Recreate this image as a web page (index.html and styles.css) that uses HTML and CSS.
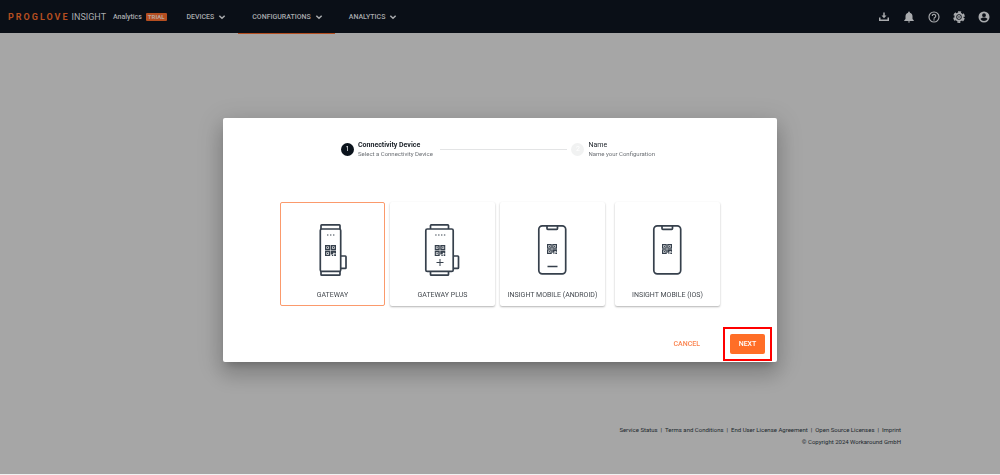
FILE: index.html
```html
<!DOCTYPE html>
<html lang="en">
<head>
<meta charset="utf-8">
<meta name="viewport" content="width=device-width, initial-scale=1">
<title>ProGlove Insight</title>
<link rel="stylesheet" href="styles.css">
</head>
<body>
<svg class="defs" aria-hidden="true">
  <symbol id="chevron" viewBox="0 0 6 6"><path d="M1 2l2 2 2-2" fill="none" stroke="currentColor" stroke-width="1.1"/></symbol>
  <symbol id="qr" viewBox="0 0 12 12">
    <path fill="#36404c" fill-rule="evenodd" d="M0 0h5.700v5.700H0zM1.500 1.500v2.700h2.700V1.500zM6.300 0H12v5.700H6.300zM7.800 1.500v2.700h2.700V1.500zM0 6.300h5.700V12H0zM1.500 7.800v2.700h2.700V7.800zM6.300 6.300H12v3h-1.600V8.400H9v2H6.300zM7.500 11H9v1H7.500zM10 10.200h2V12h-2z"/>
    <path fill="#36404c" d="M2.200 2.200h1.300v1.300H2.200zM8.500 2.200h1.300v1.300H8.500zM2.200 8.500h1.300v1.300H2.200z"/>
  </symbol>
</svg>

<header class="topbar">
  <a class="brand" href="#"><span class="brand-name">PROGLOVE</span><span class="brand-product">INSIGHT</span></a>
  <span class="plan">Analytics</span>
  <span class="trial">TRIAL</span>
  <nav class="menu">
    <button class="menu-item" type="button">DEVICES <svg class="chevron"><use href="#chevron"/></svg></button>
    <button class="menu-item menu-item-active" type="button">CONFIGURATIONS <svg class="chevron"><use href="#chevron"/></svg></button>
    <button class="menu-item" type="button">ANALYTICS <svg class="chevron"><use href="#chevron"/></svg></button>
  </nav>
  <div class="tools">
    <button class="tool" type="button" aria-label="Downloads"><svg viewBox="0 0 24 24"><path d="M10.500 3h3v6H17l-5 5.500L7 9h3.500zM2 13h3v4h14v-4h3v7H2z"/></svg></button>
    <button class="tool" type="button" aria-label="Notifications"><svg viewBox="0 0 24 24"><path d="M12 23c1.300 0 2.300-1 2.300-2H9.700c0 1 1 2 2.300 2zM19 16v-5.500c0-3.500-2-6.200-5.300-7V2.500a1.700 1.700 0 0 0-3.400 0v1C7 4.300 5 7 5 10.500V16l-2.500 2.500V20h19v-1.500z"/></svg></button>
    <button class="tool" type="button" aria-label="Help"><svg viewBox="0 0 24 24"><circle cx="12" cy="12" r="10" fill="none" stroke="currentColor" stroke-width="2.300"/><path d="M8.500 10a3.500 3.500 0 1 1 5.500 2.800c-1.200.9-2 1.400-2 2.700" fill="none" stroke="currentColor" stroke-width="2.200"/><path d="M10.800 16.500h2.400v2.300h-2.400z"/></svg></button>
    <button class="tool" type="button" aria-label="Settings"><svg viewBox="0 0 24 24"><g fill="none" stroke="currentColor"><circle cx="12" cy="12" r="7.300" stroke-width="3.800"/><circle cx="12" cy="12" r="2.600" stroke-width="2.400"/><circle cx="12" cy="12" r="10" stroke-width="3.500" stroke-dasharray="6 4.472" stroke-dashoffset="-2.200"/></g></svg></button>
    <button class="tool" type="button" aria-label="Account"><svg viewBox="0 0 24 24"><path fill-rule="evenodd" d="M12 1a11 11 0 1 0 0 22 11 11 0 0 0 0-22zm0 3.500a3.800 3.800 0 1 1 0 7.600 3.800 3.800 0 0 1 0-7.600zM12 20c-3 0-5.500-1.500-7-3.800.1-2.300 4.700-3.400 7-3.400s6.900 1.100 7 3.400C17.500 18.500 15 20 12 20z"/></svg></button>
  </div>
</header>

<main class="page"></main>

<footer class="footer">
  <div class="links"><a href="#">Service Status</a><span>|</span><a href="#">Terms and Conditions</a><span>|</span><a href="#">End User License Agreement</a><span>|</span><a href="#">Open Source Licenses</a><span>|</span><a href="#">Imprint</a></div>
  <div>© Copyright 2024 Workaround GmbH</div>
</footer>

<div class="overlay">
  <section class="dialog" role="dialog" aria-modal="true" aria-label="New configuration">
    <ol class="steps">
      <li class="step">
        <span class="step-number step-number-current">1</span>
        <span class="step-text"><strong class="step-title">Connectivity Device</strong><span class="step-note">Select a Connectivity Device</span></span>
      </li>
      <li class="step-line" role="presentation"></li>
      <li class="step">
        <span class="step-number">2</span>
        <span class="step-text"><span class="step-title">Name</span><span class="step-note">Name your Configuration</span></span>
      </li>
    </ol>

    <div class="cards">
      <button class="card card-selected" type="button" aria-pressed="true">
        <svg class="device" viewBox="1 0 40 54"><g fill="none" stroke="#36404c" stroke-width="1.700"><path d="M10 6V2.500q0-.7.700-.7h17.600q.7 0 .7.700V6M10 48v3.500q0 .7.700.7h17.600q.7 0 .7-.7V48M30 33h4.300q.7 0 .7.700v11q0 .7-.7.700H30"/><rect x="9.300" y="6" width="20.400" height="42.400" rx="1.500"/></g><path d="M16 12h1.400M19 12h1.400M22 12h1.400" stroke="#36404c" stroke-width="1.200"/><use href="#qr" x="14" y="22" width="11" height="11"/></svg>
        <span>GATEWAY</span>
      </button>
      <button class="card" type="button" aria-pressed="false">
        <svg class="device" viewBox="0 0 40 54"><g fill="none" stroke="#36404c" stroke-width="1.700"><path d="M8.500 6V2.500q0-.7.700-.7h16.600q.7 0 .7.700V6M8.500 48v3.500q0 .7.700.7h16.600q.7 0 .7-.7V48M31.500 33h4.300q.7 0 .7.700v11q0 .7-.7.700h-4.300"/><rect x="3.800" y="6" width="27.400" height="42.400" rx="1.500"/><path d="M14.500 39.500h7M18 36v7" stroke-width="1"/></g><path d="M13.200 12h1.400M16.100 12h1.400M19 12h1.400M21.900 12h1.400" stroke="#36404c" stroke-width="1.200"/><use href="#qr" x="12.500" y="22" width="11" height="11"/></svg>
        <span>GATEWAY PLUS</span>
      </button>
      <button class="card" type="button" aria-pressed="false">
        <svg class="device" viewBox="0 0 40 54"><g fill="none" stroke="#36404c" stroke-width="1.700"><rect x="6.800" y="2.800" width="26.900" height="48" rx="3.500"/><path d="M15 3v2.500q0 .8.800.8h8.900q.8 0 .8-.8V3M15.500 43.500h10"/></g><use href="#qr" x="15" y="21" width="10" height="10"/></svg>
        <span>INSIGHT MOBILE (ANDROID)</span>
      </button>
      <button class="card card-apart" type="button" aria-pressed="false">
        <svg class="device" viewBox="0 0 40 54"><g fill="none" stroke="#36404c" stroke-width="1.700"><rect x="6.800" y="2.800" width="26.900" height="48" rx="3.500"/><path d="M15 3v2.500q0 .8.800.8h8.900q.8 0 .8-.8V3"/></g><use href="#qr" x="15" y="21" width="10" height="10"/></svg>
        <span>INSIGHT MOBILE (IOS)</span>
      </button>
    </div>

    <div class="actions">
      <button class="cancel" type="button">CANCEL</button>
      <div class="highlight"><button class="next" type="button">NEXT</button></div>
    </div>
  </section>
</div>
</body>
</html>
```
FILE: styles.css
```css
* { box-sizing: border-box; }

body {
  margin: 0;
  min-height: 100vh;
  display: flex;
  flex-direction: column;
  background: #a6a6a6;
  border-bottom: 1px solid #f2f2f2;
  font-family: Roboto, "Liberation Sans", sans-serif;
  font-size: 7px;
  line-height: 8px;
  color: #20262d;
}

button {
  margin: 0;
  padding: 0;
  border: 0;
  background: none;
  font: inherit;
  color: inherit;
  cursor: pointer;
}

a { color: inherit; text-decoration: none; }

.defs { position: absolute; width: 0; height: 0; }

.topbar {
  display: flex;
  align-items: center;
  height: 33px;
  padding: 0 9px 0 8px;
  background: #0a0f17;
  color: #a9abae;
}

.brand { display: flex; align-items: center; gap: 2px; line-height: 12px; }
.brand-name { font-size: 9px; font-weight: 700; letter-spacing: 2px; color: #b54e20; }
.brand-product { font-size: 9px; }
.plan { margin-left: 7px; font-weight: 500; }

.trial {
  margin-left: 4px;
  padding: 0 2px;
  border-radius: 1px;
  background: #b54e20;
  color: #b9a79e;
  font-size: 6px;
  font-weight: 700;
}

.menu { display: flex; align-self: stretch; margin-left: 6px; }

.menu-item {
  display: flex;
  align-items: center;
  gap: 4px;
  padding: 0 12px 0 14px;
  font-weight: 500;
}

.menu-item-active { box-shadow: 0 1px 0 0 #b54e20; }
.chevron { width: 8px; height: 8px; }

.tools { display: flex; gap: 11px; margin-left: auto; }
.tool { display: flex; padding: 1px; }
.tool svg { width: 12px; height: 12px; fill: currentColor; }

.page { flex: 1; }

.footer {
  padding: 0 99px 26px;
  font-size: 6px;
  line-height: 12px;
  text-align: right;
}

.links { display: flex; justify-content: flex-end; gap: 3px; }

.overlay {
  position: fixed;
  inset: 0;
  display: flex;
  align-items: center;
  justify-content: center;
  padding-top: 5px;
}

.dialog {
  width: 554px;
  max-width: 90%;
  border-radius: 2px;
  background: #fff;
  box-shadow: 0 6px 8px -4px rgba(0, 0, 0, .2), 0 12px 20px 2px rgba(0, 0, 0, .14), 0 5px 24px 4px rgba(0, 0, 0, .12);
}

.steps {
  display: flex;
  align-items: center;
  margin: 0;
  padding: 23px 122px 0 118px;
  list-style: none;
}

.step { display: flex; align-items: center; gap: 4px; }

.step-number {
  width: 13px;
  height: 13px;
  border-radius: 50%;
  background: #f1f2f2;
  color: #fff;
  line-height: 13px;
  text-align: center;
}

.step-number-current { background: #0b131c; }
.step-text { display: flex; flex-direction: column; white-space: nowrap; }
.step-title { font-size: 7px; line-height: 9px; }
.step-note { font-size: 6px; line-height: 8px; color: #6c7075; }
.step-line { flex: 1; height: 1px; margin: 0 4px 0 7px; background: #e3e4e5; }

.cards {
  display: flex;
  justify-content: center;
  gap: 5px;
  padding-top: 44px;
}

.card {
  display: flex;
  flex-direction: column;
  align-items: center;
  gap: 14px;
  width: 105px;
  padding: 20px 0 6px;
  border: 1px solid transparent;
  border-radius: 2px;
  box-shadow: 0 1px 2px rgba(0, 0, 0, .3);
  color: #454a50;
}

.card-selected { border-color: #fb9a6c; box-shadow: none; }
.card-apart { margin-left: 5px; }
.device { width: 40px; height: 54px; margin-right: 2px; }

.actions {
  display: flex;
  align-items: center;
  justify-content: flex-end;
  gap: 23px;
  padding: 21px 5px 1px;
  font-weight: 500;
}

.cancel { color: #fa8450; }
.highlight { padding: 5px; border: 2px solid #f00; }

.next {
  display: block;
  width: 35px;
  height: 20px;
  border-radius: 2px;
  background: #ff6e27;
  color: #fff;
}
```
